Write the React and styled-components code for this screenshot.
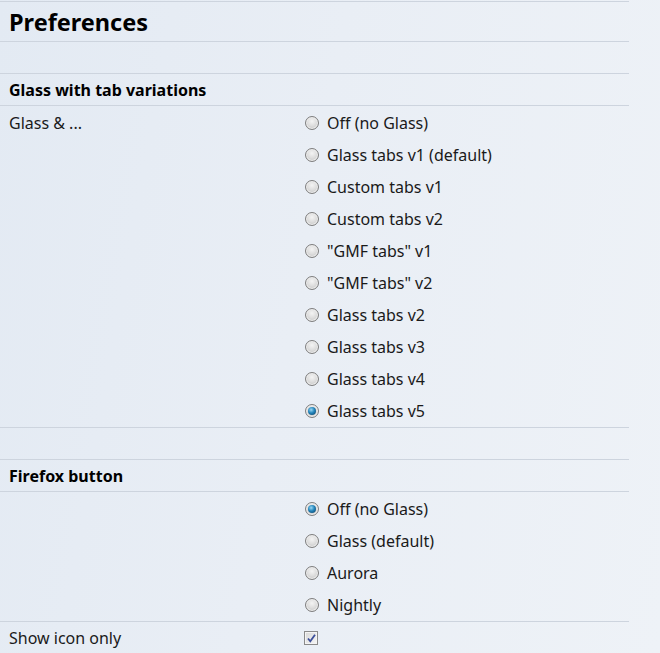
import React from 'react'
import styled, { createGlobalStyle } from 'styled-components'

const Global = createGlobalStyle`
  html, body {
    margin: 0;
    padding: 0;
    height: 100%;
  }
  body {
    background: linear-gradient(100deg, #e3eaf3 0%, #e9eef5 45%, #eef2f7 100%);
    font-family: 'Noto Sans', 'Open Sans', sans-serif;
    color: #1a1a1a;
  }
`

const Page = styled.div`
  width: 629px;
  padding-top: 1px;
`

const Row = styled.div`
  display: grid;
  grid-template-columns: 304px 1fr;
  align-items: center;
  height: ${(p) => p.h || 32}px;
  border-bottom: ${(p) => (p.last ? 'none' : '1px solid #cdd4de')};
  box-sizing: border-box;
  ${(p) => (p.top ? 'border-top: 1px solid #cdd4de;' : '')}
`

const Title = styled.h1`
  margin: 0;
  padding-left: 9px;
  font-size: 23.5px;
  font-weight: 700;
  color: #000;
`

const SectionHead = styled.div`
  padding-left: 9px;
  font-size: 16px;
  font-weight: 700;
  color: #000;
`

const Label = styled.div`
  padding-left: 9px;
  font-size: 16px;
  color: #1a1a1a;
  align-self: ${(p) => (p.center ? 'center' : 'start')};
  padding-top: ${(p) => (p.center ? 0 : 6)}px;
`

const Options = styled.div`
  display: flex;
  flex-direction: column;
`

const Option = styled.label`
  display: flex;
  align-items: center;
  gap: 8px;
  height: 32px;
  padding-left: 1px;
  font-size: 16px;
  color: #1a1a1a;
`

const Radio = styled.span`
  width: 14px;
  height: 14px;
  border-radius: 50%;
  box-sizing: border-box;
  border: 1px solid #7e7e7e;
  background: radial-gradient(circle at 50% 35%, #f4f4f4 0%, #dcdcdc 50%, #b8b8b8 100%);
  box-shadow: inset 0 0 0 1px #eeeeee;
  display: grid;
  place-items: center;
  flex: none;
  &::after {
    content: '';
    display: ${(p) => (p.checked ? 'block' : 'none')};
    width: 8px;
    height: 8px;
    border-radius: 50%;
    background: radial-gradient(circle at 40% 35%, #9ad8f4 0%, #2384bb 45%, #0b3a5c 100%);
  }
`

const Check = styled.span`
  width: 14px;
  height: 14px;
  box-sizing: border-box;
  border: 1px solid #8a8a8a;
  background: linear-gradient(135deg, #d8d8d8, #f6f6f6);
  box-shadow: inset 0 0 0 1px #f4f4f4;
  display: grid;
  place-items: center;
  svg {
    display: block;
  }
`

const glassOpts = [
  'Off (no Glass)',
  'Glass tabs v1 (default)',
  'Custom tabs v1',
  'Custom tabs v2',
  '"GMF tabs" v1',
  '"GMF tabs" v2',
  'Glass tabs v2',
  'Glass tabs v3',
  'Glass tabs v4',
  'Glass tabs v5',
]

const fxOpts = ['Off (no Glass)', 'Glass (default)', 'Aurora', 'Nightly']

const RadioList = ({ items, selected }) => (
  <Options>
    {items.map((t, i) => (
      <Option key={t}>
        <Radio checked={i === selected} />
        {t}
      </Option>
    ))}
  </Options>
)

export default function App() {
  return (
    <>
      <Global />
      <Page>
        <Row h={41} top>
          <Title>Preferences</Title>
        </Row>
        <Row />
        <Row>
          <SectionHead>Glass with tab variations</SectionHead>
        </Row>
        <Row h={322}>
          <Label>Glass &amp; ...</Label>
          <RadioList items={glassOpts} selected={9} />
        </Row>
        <Row />
        <Row>
          <SectionHead>Firefox button</SectionHead>
        </Row>
        <Row h={130}>
          <div />
          <RadioList items={fxOpts} selected={0} />
        </Row>
        <Row h={32} last>
          <Label center>Show icon only</Label>
          <Check>
            <svg width="11" height="11" viewBox="0 0 11 11">
              <path d="M2 5.5 L4.3 8.3 L9 1.8" fill="none" stroke="#3c4f9a" strokeWidth="1.8" />
            </svg>
          </Check>
        </Row>
      </Page>
    </>
  )
}
